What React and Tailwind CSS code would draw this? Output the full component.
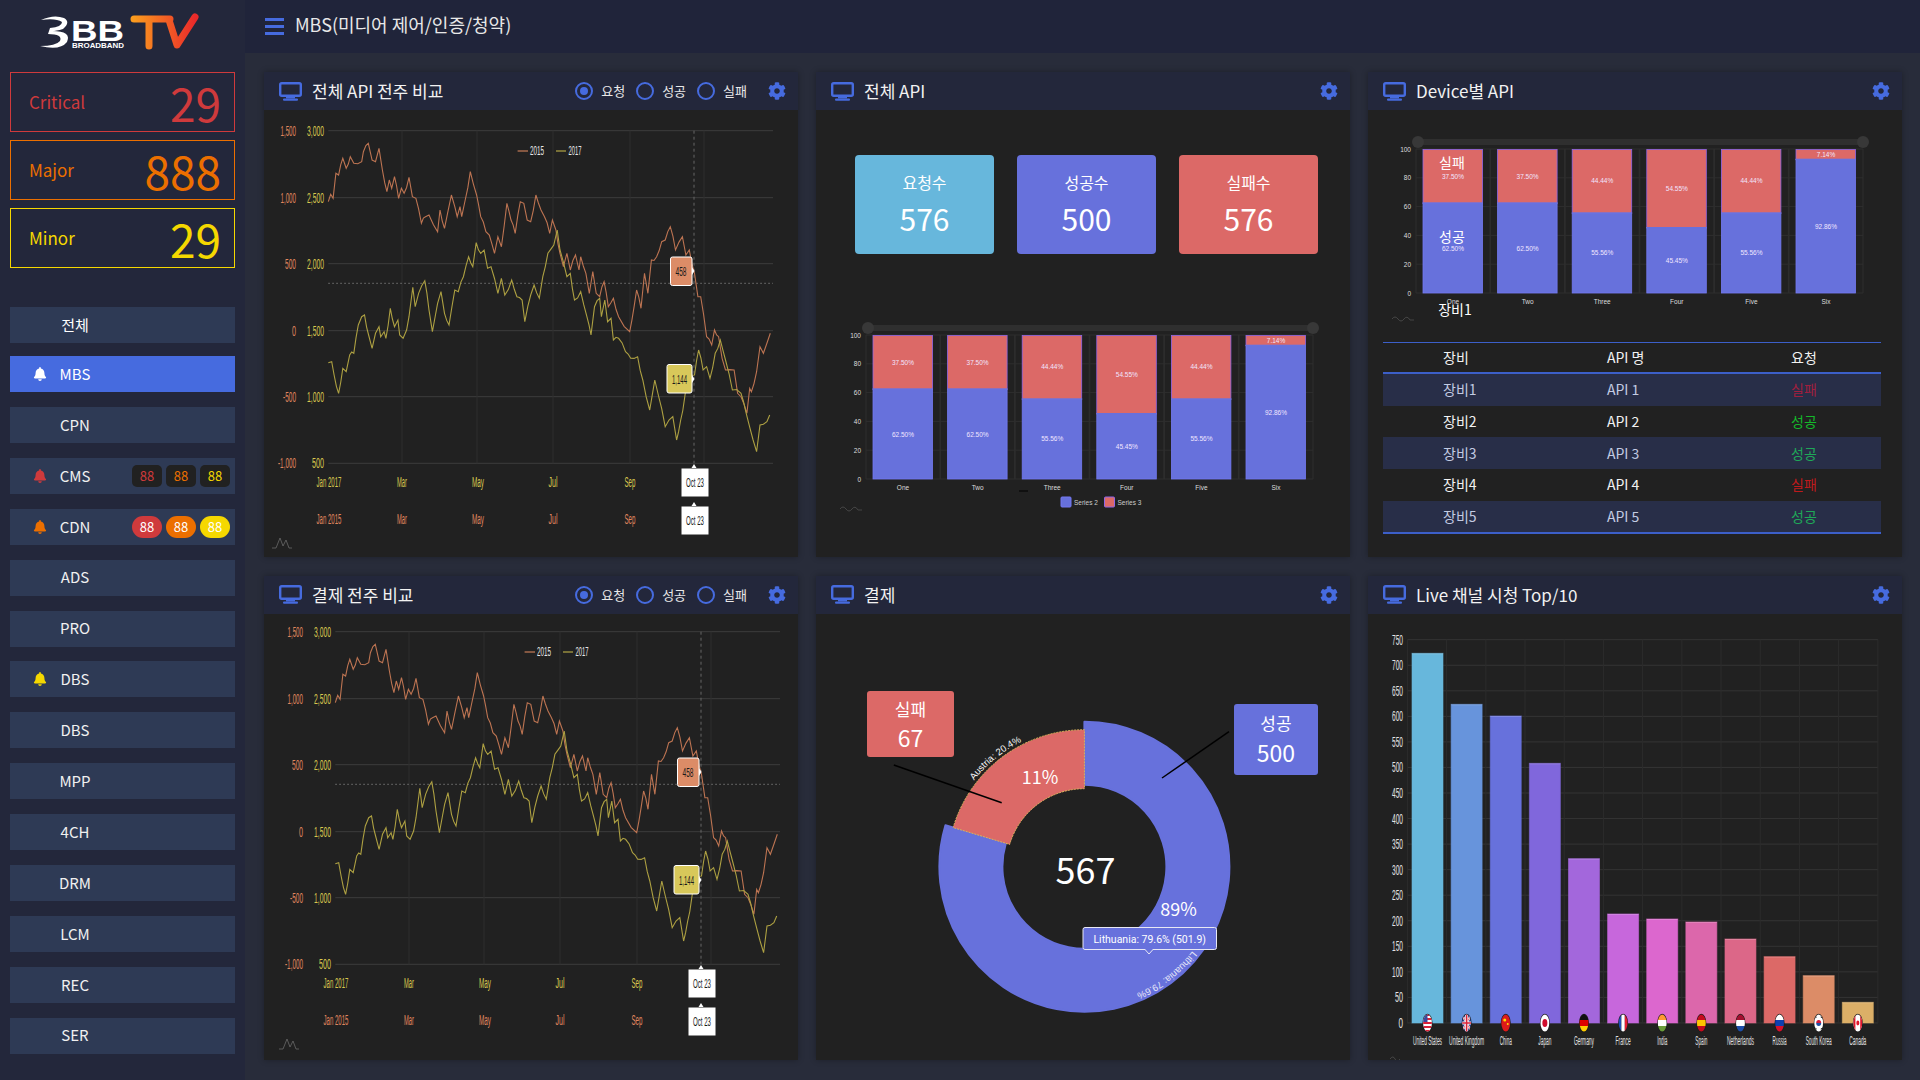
import React from "react";
import { FaBell, FaCog } from "react-icons/fa";

const PALETTE = ["#67b7dc", "#6794dc", "#6771dc", "#8067dc", "#a367dc", "#c767dc", "#dc67ce", "#dc67ab", "#dc6788", "#dc6967", "#dc8c67", "#dcaf67"];
const LABEL_FONT = "'Liberation Sans', sans-serif";

const NAV = [
  { name: "CPN" },
  { name: "CMS", bell: "#cf3a3c", badges: "dark" },
  { name: "CDN", bell: "#ec6f00", badges: "solid" },
  { name: "ADS" },
  { name: "PRO" },
  { name: "DBS", bell: "#f5d800" },
  { name: "DBS" },
  { name: "MPP" },
  { name: "4CH" },
  { name: "DRM" },
  { name: "LCM" },
  { name: "REC" },
  { name: "SER" },
];

// zoomed reference coordinates, converted in linePath()
const SERIES_A = [198,425,205,403,212,415,220,340,228,345,240,295,250,325,262,290,272,310,295,305,300,275,314,250,325,300,335,305,345,265,355,330,368,395,375,360,382,385,390,350,402,415,410,385,418,400,432,352,442,410,452,415,468,490,480,470,490,465,515,515,522,450,535,505,555,405,565,440,572,470,580,440,585,470,595,420,610,335,628,405,640,470,655,515,665,525,680,580,690,530,700,560,716,430,728,480,740,520,755,425,765,430,775,480,785,485,800,405,815,450,825,470,840,520,848,480,858,510,870,580,880,620,890,580,900,630,915,585,925,630,930,590,945,640,955,700,965,635,975,700,985,710,998,665,1010,740,1025,715,1040,770,1072,815,1085,740,1092,690,1105,745,1115,640,1125,700,1135,600,1150,590,1165,545,1175,540,1190,500,1205,570,1225,530,1235,585,1245,570,1260,640,1270,710,1278,710,1295,830,1310,855,1318,810,1330,830,1340,895,1350,930,1375,930,1385,1000,1395,1010,1412,1060,1420,985,1425,995,1440,935,1450,860,1460,880,1470,850,1480,820,1488,790];
const SERIES_B = [198,908,208,905,215,945,228,1000,240,925,250,935,260,885,272,880,285,795,295,770,303,765,315,825,325,865,335,820,345,800,350,830,360,815,365,835,378,745,390,800,400,780,405,825,415,835,425,810,432,770,443,682,450,740,460,700,478,662,490,750,500,815,515,730,525,695,535,760,548,795,565,690,575,695,590,650,605,590,617,620,627,548,640,580,650,570,660,625,670,620,690,700,700,655,710,705,730,660,745,710,760,720,768,785,785,705,795,675,810,715,820,650,835,580,852,555,862,510,870,570,890,650,900,640,912,720,930,695,948,770,960,825,970,740,985,715,990,770,1000,720,1008,785,1018,775,1025,840,1040,835,1060,875,1075,895,1095,890,1110,960,1130,1050,1145,960,1155,1005,1175,1100,1197,1070,1208,1140,1220,1080,1232,1010,1240,950,1260,945,1272,870,1285,930,1295,920,1305,955,1320,880,1335,840,1350,900,1370,990,1395,1000,1410,1060,1430,1140,1440,1175,1450,1095,1470,1085,1478,1065,1488,1165];

function linePath(data, seed) {
  let d = "";
  for (let i = 0; i < data.length - 2; i += 2) {
    const x0 = data[i] / 2.9 - 4;
    const y0 = data[i + 1] / 3 - 50;
    const x1 = data[i + 2] / 2.9 - 4;
    const y1 = data[i + 3] / 3 - 50;
    const n = x1 - x0 > 4 ? 2 : 1;
    for (let k = 0; k < n; k++) {
      const t = k / n;
      const wob = k === 0 ? 0 : Math.sin(i * 12.9898 + seed + k) * 2.2;
      d += `${d ? "L" : "M"}${(x0 + (x1 - x0) * t).toFixed(1)} ${(y0 + (y1 - y0) * t + wob).toFixed(1)}`;
    }
  }
  return d;
}

// squeezed labels: the reference charts are narrow, tall text
function Squeezed({ x, y, w, fill, anchor = "middle", size = 14, children }) {
  return (
    <text x={x} y={y} textLength={w} lengthAdjust="spacingAndGlyphs" textAnchor={anchor} dominantBaseline="central" fill={fill} fontSize={size} fontFamily={LABEL_FONT}>
      {children}
    </text>
  );
}

function ChartMark({ x, y }) {
  return (
    <path d={`M${x} ${y}h4l4 -10l3 8l3 -6l3 8h3`} fill="none" stroke="#6a6a6a" strokeWidth="0.8" />
  );
}

function Sidebar() {
  return (
    <aside className="w-[245px] shrink-0 bg-[#23273b] flex flex-col">
      <div className="h-[72px] pl-[38px] pt-[13px]">
        <svg width="165" height="40" viewBox="0 0 165 40">
          <defs>
            <linearGradient id="tv" x1="0" x2="1" y1="0" y2="0">
              <stop offset="0" stopColor="#fb9b1e" />
              <stop offset="1" stopColor="#ea2a2a" />
            </linearGradient>
          </defs>
          <path d="M3 7Q16 1 26 5Q33 9 25 16Q18 18 14 18Q34 18 29 29Q22 38 2 33Q18 33 22 28Q25 21 10 21L12 15Q24 14 24 9Q18 5 3 7Z" fill="#fff" />
          <text x="33" y="28" fill="#fff" fontSize="29" fontWeight="700" fontFamily={LABEL_FONT} textLength="53" lengthAdjust="spacingAndGlyphs">BB</text>
          <text x="34" y="35" fill="#fff" fontSize="6.5" fontWeight="700" fontFamily={LABEL_FONT} textLength="52" lengthAdjust="spacingAndGlyphs">BROADBAND</text>
          <path d="M96 6H132M111 6V33M131 7L139 32L157 4" fill="none" stroke="url(#tv)" strokeWidth="7" strokeLinecap="round" strokeLinejoin="round" />
        </svg>
      </div>
      <div className="px-[10px] flex flex-col gap-2">
        <AlertBox label="Critical" value="29" text="text-[#cf3a3c]" border="border-[#cf3a3c]" />
        <AlertBox label="Major" value="888" text="text-[#ec6f00]" border="border-[#ec6f00]" />
        <AlertBox label="Minor" value="29" text="text-[#f5d800]" border="border-[#f5d800]" />
      </div>
      <div className="px-[10px] mt-[39px] flex flex-col">
        <div className="h-9 bg-[#2e3a55] flex items-center text-white text-[15px]">
          <span className="w-[130px] text-center">전체</span>
        </div>
        <div className="h-9 mt-[13px] bg-[#466bdf] flex items-center text-white text-[15px] pl-[23px]">
          <FaBell className="w-[14px] h-[14px] text-white" />
          <span className="w-[56px] text-center">MBS</span>
        </div>
        <div className="mt-[15px] flex flex-col gap-[14.9px]">
          {NAV.map((item, i) => (
            <NavRow key={i} {...item} />
          ))}
        </div>
      </div>
    </aside>
  );
}

function AlertBox({ label, value, text, border }) {
  return (
    <div className={`h-[60px] border flex items-center justify-between pl-[18px] pr-[13px] ${border} ${text}`}>
      <span className="text-[17px]">{label}</span>
      <span className="text-[46px] leading-none">{value}</span>
    </div>
  );
}

function NavRow({ name, bell, badges }) {
  return (
    <div className="h-9 bg-[#2e3a55] flex items-center text-[#f0f0f0] text-[15px] pl-[23px] pr-[5px]">
      <span className="w-[14px] flex">{bell && <FaBell className="w-[14px] h-[14px]" style={{ color: bell }} />}</span>
      <span className="w-[56px] text-center">{name}</span>
      {badges === "dark" && (
        <div className="ml-auto flex gap-1 text-[13px]">
          <span className="w-[30px] h-[22px] rounded-[5px] bg-[#212121] text-[#cf3a3c] text-center leading-[22px]">88</span>
          <span className="w-[30px] h-[22px] rounded-[5px] bg-[#212121] text-[#ec6f00] text-center leading-[22px]">88</span>
          <span className="w-[30px] h-[22px] rounded-[5px] bg-[#212121] text-[#f5d800] text-center leading-[22px]">88</span>
        </div>
      )}
      {badges === "solid" && (
        <div className="ml-auto flex gap-1 text-[13px] text-white">
          <span className="w-[30px] h-[22px] rounded-full bg-[#cf3a3c] text-center leading-[22px]">88</span>
          <span className="w-[30px] h-[22px] rounded-full bg-[#ec6f00] text-center leading-[22px]">88</span>
          <span className="w-[30px] h-[22px] rounded-full bg-[#f5d800] text-center leading-[22px]">88</span>
        </div>
      )}
    </div>
  );
}

function MonitorIcon() {
  return (
    <svg width="23" height="19" viewBox="0 0 23 19" className="shrink-0">
      <rect x="1.2" y="1.2" width="20.6" height="12.6" rx="1.5" fill="none" stroke="#466bdf" strokeWidth="2.4" />
      <rect x="7" y="14" width="9" height="2.5" fill="#466bdf" />
      <rect x="4" y="16.5" width="15" height="2.2" rx="1" fill="#466bdf" />
    </svg>
  );
}

function Radio({ label, on, gap }) {
  return (
    <div className={`flex items-center ${gap}`}>
      <span className="w-[18px] h-[18px] rounded-full border-2 border-[#466bdf] flex items-center justify-center">
        {on && <span className="w-2 h-2 rounded-full bg-[#466bdf]" />}
      </span>
      <span className="text-[13px] text-[#e8e8e8] ml-[8px]">{label}</span>
    </div>
  );
}

function Panel({ title, radios, children }) {
  return (
    <section className="bg-[#212121] flex flex-col overflow-hidden shadow-[0_0_6px_rgba(0,0,0,0.3)]">
      <header className="h-[38px] shrink-0 bg-[#23273b] flex items-center pl-[15px] pr-[12px]">
        <MonitorIcon />
        <h2 className="ml-[10px] text-[17px] text-[#f2f2f2] font-normal">{title}</h2>
        <div className="ml-auto flex items-center">
          {radios && (
            <div className="flex items-center gap-[11px] mr-[21px]">
              <Radio label="요청" on />
              <Radio label="성공" />
              <Radio label="실패" />
            </div>
          )}
          <FaCog className="w-[18px] h-[18px] text-[#466bdf]" />
        </div>
      </header>
      <div className="flex-1 relative min-h-0">{children}</div>
    </section>
  );
}

function LineChart({ dx, dy }) {
  const orange = "#e0875f";
  const yellow = "#d9c84f";
  const grid = [20.7, 87.7, 153.7, 220.7, 286.7, 353.3];
  const left = [["1,500", 15.5], ["1,000", 15.5], ["500", 11], ["0", 4], ["-500", 13], ["-1,000", 18]];
  const right = [["3,000", 17], ["2,500", 17], ["2,000", 17], ["1,500", 17], ["1,000", 17], ["500", 12]];
  const xs = [["Mar", 138, 10], ["May", 214, 12], ["Jul", 289, 9], ["Sep", 366, 11]];
  return (
    <svg width="534" height="447" viewBox="0 0 534 447" className="block">
      <g transform={`translate(${dx} ${dy})`}>
        {grid.map((y) => (
          <line key={y} x1="64.3" x2="509" y1={y} y2={y} stroke="#3d3d3d" />
        ))}
        {[138, 213, 289, 366, 440].map((x) => (
          <line key={x} x1={x} x2={x} y1="20.7" y2="353.3" stroke="#2f2f2f" />
        ))}
        <line x1="64.3" x2="509" y1="173.3" y2="173.3" stroke="#777" strokeDasharray="1.5 2.5" />
        <line x1="430" x2="430" y1="20.7" y2="353.3" stroke="#666" strokeDasharray="3 3" />

        <path d={linePath(SERIES_A, 1)} fill="none" stroke="#bd7452" strokeWidth="1.1" />
        <path d={linePath(SERIES_B, 5)} fill="none" stroke="#ada042" strokeWidth="1.1" />

        {grid.map((y, i) => (
          <g key={y}>
            <Squeezed x="32" y={y} w={left[i][1]} fill={orange} anchor="end">{left[i][0]}</Squeezed>
            <Squeezed x="60" y={y} w={right[i][1]} fill={yellow} anchor="end">{right[i][0]}</Squeezed>
          </g>
        ))}

        <line x1="253.6" x2="264" y1="41" y2="41" stroke="#c67c58" strokeWidth="1.2" />
        <Squeezed x="273" y="41" w="14" fill="#e8e8e8" size={12}>2015</Squeezed>
        <line x1="292" x2="302" y1="41" y2="41" stroke="#b3a645" strokeWidth="1.2" />
        <Squeezed x="311" y="41" w="13" fill="#e8e8e8" size={12}>2017</Squeezed>

        <Squeezed x="65" y="372" w="25" fill={yellow}>Jan 2017</Squeezed>
        <Squeezed x="65" y="409" w="25" fill={orange}>Jan 2015</Squeezed>
        {xs.map(([t, x, w]) => (
          <g key={t}>
            <Squeezed x={x} y="372" w={w} fill={yellow}>{t}</Squeezed>
            <Squeezed x={x} y="409" w={w} fill={orange}>{t}</Squeezed>
          </g>
        ))}

        <rect x="406.5" y="147" width="21.5" height="28.5" rx="2" fill="#dc8c67" stroke="#fff" />
        <path d="M428 157l2.5 4l-2.5 4z" fill="#fff" />
        <Squeezed x="417" y="161.5" w="11" fill="#1a1a1a" size={13}>458</Squeezed>
        <rect x="403" y="254.5" width="25" height="28.5" rx="2" fill="#d8c85a" stroke="#fff" />
        <path d="M428 265l2.5 4l-2.5 4z" fill="#fff" />
        <Squeezed x="415.5" y="269" w="15" fill="#1a1a1a" size={13}>1,144</Squeezed>

        {[358, 396].map((y) => (
          <g key={y}>
            <rect x="417" y={y} width="28" height="29" fill="#fff" stroke="#222" />
            <path d={`M427.5 ${y}l2.5 -4l2.5 4z`} fill="#fff" />
            <Squeezed x="431" y={y + 14} w="18" fill="#1a1a1a" size={13}>Oct 23</Squeezed>
          </g>
        ))}
        <ChartMark x={8} y={438} />
      </g>
    </svg>
  );
}

const STACKS = [
  [62.5, "62.50%", "37.50%"],
  [62.5, "62.50%", "37.50%"],
  [55.56, "55.56%", "44.44%"],
  [45.45, "45.45%", "54.55%"],
  [55.56, "55.56%", "44.44%"],
  [92.86, "92.86%", "7.14%"],
];
const STACK_NAMES = ["One", "Two", "Three", "Four", "Five", "Six"];

function StackedChart({ x0, height, legend, children }) {
  const top = 15;
  const h = 144;
  return (
    <svg width="534" height={height} viewBox={`0 0 534 ${height}`} className="block">
      <rect x={x0 + 2} y="5" width="444" height="6" fill="#2f2f2f" />
      <circle cx={x0 + 2} cy="8" r="6" fill="#383838" />
      <circle cx={x0 + 447} cy="8" r="6" fill="#383838" />
      {[0, 20, 40, 60, 80, 100].map((v) => {
        const y = top + h - (v / 100) * h;
        return (
          <g key={v}>
            <line x1={x0} x2={x0 + 447} y1={y} y2={y} stroke="#2e2e2e" />
            <text x={x0 - 5} y={y} textAnchor="end" dominantBaseline="central" fontSize="6.5" fill="#ddd" fontFamily={LABEL_FONT}>{v}</text>
          </g>
        );
      })}
      {STACKS.map(([v, a, b], i) => {
        const x = x0 + 7 + i * 74.6;
        const split = top + h - (v / 100) * h;
        return (
          <g key={i}>
            <line x1={x - 7} x2={x - 7} y1={top} y2={top + h} stroke="#2e2e2e" />
            <line x1={x + 67} x2={x + 67} y1={top} y2={top + h} stroke="#2e2e2e" />
            <rect x={x} y={top + 0.5} width="59.5" height={split - top} fill="#dc6967" stroke="#9166e6" strokeWidth="0.8" />
            <rect x={x} y={split} width="59.5" height={top + h - split} fill="#6771dc" stroke="#7479f2" strokeWidth="0.8" />
            <line x1={x - 0.4} x2={x + 60} y1={split} y2={split} stroke="#6771dc" />
            <text x={x + 30} y={top + (split - top) / 2} textAnchor="middle" dominantBaseline="central" fontSize="6.5" fill="#f1e6ff" fontFamily={LABEL_FONT}>{b}</text>
            <text x={x + 30} y={split + (top + h - split) / 2} textAnchor="middle" dominantBaseline="central" fontSize="6.5" fill="#f1e6ff" fontFamily={LABEL_FONT}>{a}</text>
            <text x={x + 30} y={top + h + 8} textAnchor="middle" dominantBaseline="central" fontSize="6.5" fill="#ddd" fontFamily={LABEL_FONT}>{STACK_NAMES[i]}</text>
          </g>
        );
      })}
      {legend && (
        <g fontSize="6.5" fill="#ccc" fontFamily={LABEL_FONT}>
          <line x1="203" x2="212" y1="171" y2="171" stroke="#000" />
          <rect x="245" y="177" width="10" height="10" rx="1" fill="#6771dc" stroke="#7479f2" />
          <text x="258" y="182" dominantBaseline="central">Series 2</text>
          <rect x="288.5" y="177" width="10" height="10" rx="1" fill="#dc6967" stroke="#9166e6" />
          <text x="301.5" y="182" dominantBaseline="central">Series 3</text>
        </g>
      )}
      <path d={`M24 ${legend ? 189 : 185}q3 -4 6 0t6 0t6 1h4`} fill="none" stroke="#555" strokeWidth="0.7" />
      {children}
    </svg>
  );
}

const ROWS = [
  ["장비1", "API 1", "실패", "text-[#a01f3e]"],
  ["장비2", "API 2", "성공", "text-[#14b82a]"],
  ["장비3", "API 3", "성공", "text-[#1fa858]"],
  ["장비4", "API 4", "실패", "text-[#bf1a1c]"],
  ["장비5", "API 5", "성공", "text-[#1fa858]"],
];

function DeviceTable() {
  return (
    <div className="ml-[15px] w-[498px] text-[14px] text-[#f2f2f2] border-t border-b-2 border-[#3c5fc9]">
      <div className="grid grid-cols-[224px_184px_90px] h-[31px] items-center border-b-2 border-[#3c5fc9]">
        <span className="pl-[60px]">장비</span>
        <span>API 명</span>
        <span>요청</span>
      </div>
      {ROWS.map(([a, b, c, color], i) => (
        <div key={a} className={`grid grid-cols-[224px_184px_90px] h-[31.7px] items-center ${i % 2 === 0 ? "bg-[#282e48] text-[#c3cbe2]" : ""}`}>
          <span className="pl-[60px]">{a}</span>
          <span>{b}</span>
          <span className={color}>{c}</span>
        </div>
      ))}
    </div>
  );
}

function arcPath(cx, cy, r0, r1, a0, a1) {
  const pt = (r, a) => {
    const t = (a * Math.PI) / 180;
    return `${(cx + r * Math.sin(t)).toFixed(2)} ${(cy - r * Math.cos(t)).toFixed(2)}`;
  };
  const large = Math.abs(a1 - a0) > 180 ? 1 : 0;
  return `M${pt(r1, a0)}A${r1} ${r1} 0 ${large} 1 ${pt(r1, a1)}L${pt(r0, a1)}A${r0} ${r0} 0 ${large} 0 ${pt(r0, a0)}Z`;
}

function circlePath(cx, cy, r, a0, a1) {
  const pt = (a) => {
    const t = (a * Math.PI) / 180;
    return `${(cx + r * Math.sin(t)).toFixed(2)} ${(cy - r * Math.cos(t)).toFixed(2)}`;
  };
  return `M${pt(a0)}A${r} ${r} 0 0 1 ${pt(a1)}`;
}

function DonutChart() {
  const cx = 268.4;
  const cy = 252.7;
  return (
    <>
      <svg width="534" height="447" viewBox="0 0 534 447" className="block">
        <defs>
          <path id="arc-austria" d={circlePath(cx, cy, 140, -52, -15)} />
          <path id="arc-lithuania" d={circlePath(cx, cy, 137, 128, 175)} />
        </defs>
        <path d={arcPath(cx, cy, 82, 145, 0, 286.6)} fill="#6771dc" stroke="#6771dc" strokeLinejoin="round" strokeWidth="2" />
        <path d={arcPath(cx, cy, 78, 137, -73.4, 0)} fill="#dc6967" stroke="#d9b45c" strokeDasharray="2 1" strokeLinejoin="round" />
        <text fontSize="9.5" fill="#f5f5f5" fontFamily={LABEL_FONT}>
          <textPath href="#arc-austria">Austria: 20.4%</textPath>
        </text>
        <text fontSize="9.5" fill="#e8e8f8" fontFamily={LABEL_FONT}>
          <textPath href="#arc-lithuania">Lithuania: 79.6%</textPath>
        </text>
        <text x={cx + 1} y={cy + 1} textAnchor="middle" dominantBaseline="central" fontSize="36" fill="#fff">567</text>
        <text x="224" y="162" textAnchor="middle" dominantBaseline="central" fontSize="18" fill="#fff">11%</text>
        <text x="362.5" y="294" textAnchor="middle" dominantBaseline="central" fontSize="18" fill="#fff">89%</text>
        <line x1="77.8" y1="151" x2="185.7" y2="188.7" stroke="#000" strokeWidth="1.5" />
        <line x1="413" y1="117.7" x2="346" y2="164" stroke="#000" strokeWidth="1.5" />
        <rect x="267" y="313.5" width="133.5" height="22" rx="2" fill="#6771dc" stroke="#e8e8f4" />
        <path d="M329 335.5l4 4.5l4 -4.5z" fill="#6771dc" stroke="#e8e8f4" />
        <line x1="329.5" x2="336.5" y1="335.5" y2="335.5" stroke="#6771dc" />
        <text x="333.7" y="325" textAnchor="middle" dominantBaseline="central" fontSize="10.5" fill="#fff" fontFamily="Roboto, sans-serif">Lithuania: 79.6% (501.9)</text>
      </svg>
      <div className="absolute left-[51px] top-[77px] w-[87px] h-[66px] rounded-[3px] bg-[#dc6967] text-white text-center flex flex-col justify-center">
        <div className="text-[17px] leading-[26px]">실패</div>
        <div className="text-[23px] leading-[30px]">67</div>
      </div>
      <div className="absolute left-[418px] top-[90px] w-[84px] h-[71px] rounded-[3px] bg-[#6771dc] text-white text-center flex flex-col justify-center">
        <div className="text-[17px] leading-[26px]">성공</div>
        <div className="text-[23px] leading-[32px]">500</div>
      </div>
    </>
  );
}

const TOPS = [250, 403, 438, 580, 866, 1032, 1047, 1056, 1107, 1160, 1217, 1297];
const COUNTRIES = [
  ["United States", 29], ["United Kingdom", 35], ["China", 12], ["Japan", 13], ["Germany", 20], ["France", 15],
  ["India", 10], ["Spain", 12], ["Netherlands", 27], ["Russia", 14], ["South Korea", 26], ["Canada", 17],
];

function Flag({ i, x, y }) {
  const bands = {
    4: ["#111", "#d00", "#fc0"],
    7: ["#c60b1e", "#ffc400", "#c60b1e"],
    8: ["#a3102f", "#fff", "#1c4ea8"],
    9: ["#fff", "#0f3fb0", "#d5102b"],
    6: ["#f93", "#fff", "#6a9c3a"],
  }[i];
  let body = null;
  if (bands) {
    body = bands.map((c, k) => <rect key={k} x="-5" y={-9 + k * 6} width="10" height="6" fill={c} />);
  } else if (i === 0) {
    body = (
      <>
        <rect x="-5" y="-9" width="10" height="18" fill="#fff" />
        {[-9, -5, -1, 3, 7].map((s) => <rect key={s} x="-5" y={s} width="10" height="2" fill="#d8233a" />)}
        <rect x="-5" y="-9" width="5" height="8" fill="#3c4a9e" />
      </>
    );
  } else if (i === 1) {
    body = (
      <>
        <rect x="-5" y="-9" width="10" height="18" fill="#29408c" />
        <path d="M-5 -9L5 9M5 -9L-5 9" stroke="#fff" strokeWidth="2" />
        <path d="M-5 -9L5 9M5 -9L-5 9" stroke="#d8233a" strokeWidth="0.7" />
        <path d="M0 -9V9M-5 0H5" stroke="#fff" strokeWidth="3" />
        <path d="M0 -9V9M-5 0H5" stroke="#d8233a" strokeWidth="1.6" />
      </>
    );
  } else if (i === 2) {
    body = (
      <>
        <rect x="-5" y="-9" width="10" height="18" fill="#de1a1a" />
        <circle cx="-1" cy="-3" r="1.5" fill="#fd0" />
        <circle cx="2" cy="1" r="1" fill="#fd0" />
      </>
    );
  } else if (i === 3) {
    body = (
      <>
        <rect x="-5" y="-9" width="10" height="18" fill="#fff" />
        <ellipse rx="2.5" ry="4" fill="#d00c2c" />
      </>
    );
  } else if (i === 5) {
    body = (
      <>
        <rect x="-5" y="-9" width="3.3" height="18" fill="#1d4eb8" />
        <rect x="-1.7" y="-9" width="3.4" height="18" fill="#fff" />
        <rect x="1.7" y="-9" width="3.3" height="18" fill="#e31b34" />
      </>
    );
  } else if (i === 10) {
    body = (
      <>
        <rect x="-5" y="-9" width="10" height="18" fill="#fff" />
        <path d="M-2.5 0a2.5 3 0 0 1 5 0z" fill="#d3173a" />
        <path d="M-2.5 0a2.5 3 0 0 0 5 0z" fill="#1f4fa3" />
        <path d="M-4 -5L-2 -6M4 -5L2 -6M-4 5L-2 6M4 5L2 6" stroke="#222" strokeWidth="1" />
      </>
    );
  } else {
    body = (
      <>
        <rect x="-5" y="-9" width="10" height="18" fill="#fff" />
        <rect x="-5" y="-9" width="2.6" height="18" fill="#e0162b" />
        <rect x="2.4" y="-9" width="2.6" height="18" fill="#e0162b" />
        <ellipse rx="1.5" ry="2.4" fill="#e0162b" />
      </>
    );
  }
  return (
    <g transform={`translate(${x} ${y})`}>
      <clipPath id={`flag-${i}`}>
        <ellipse rx="4.4" ry="8.6" />
      </clipPath>
      <ellipse rx="5" ry="9.2" fill="#1c1c1c" />
      <g clipPath={`url(#flag-${i})`}>{body}</g>
    </g>
  );
}

function TopChart() {
  return (
    <svg width="534" height="447" viewBox="0 0 534 447" className="block">
      {Array.from({ length: 16 }).map((_, i) => {
        const y = 25.7 + i * 25.55;
        const v = 750 - i * 50;
        return (
          <g key={v}>
            <line x1="39.4" x2="510" y1={y} y2={y} stroke="#343434" />
            <Squeezed x="35" y={y} w={v >= 100 ? 11 : v === 50 ? 8 : 4.5} fill="#e4e4e4" anchor="end">{v}</Squeezed>
          </g>
        );
      })}
      {Array.from({ length: 13 }).map((_, i) => (
        <line key={i} x1={39.4 + i * 39.2} x2={39.4 + i * 39.2} y1="25.7" y2="409" stroke="#2c2c2c" />
      ))}
      {TOPS.map((t, i) => {
        const x = 44 + i * 39.12;
        const y = t / 3 - 44;
        const color = PALETTE[i];
        return (
          <g key={i}>
            <rect x={x} y={y} width="31" height={409 - y} fill={color} />
            <rect x={x} y={y} width="31" height={409 - y} fill="#fff" fillOpacity="0" stroke={color} strokeOpacity="0.6" />
            <rect x={x} y={y} width="31" height="1" fill="#fff" fillOpacity="0.18" />
            <Flag i={i} x={x + 15.5} y={409} />
            <Squeezed x={x + 15.5} y="427" w={COUNTRIES[i][1]} fill="#e4e4e4" size={12}>{COUNTRIES[i][0]}</Squeezed>
          </g>
        );
      })}
      <path d="M22 445q3 -4 5 0t5 0" fill="none" stroke="#555" strokeWidth="0.7" />
    </svg>
  );
}

function StatCard({ label, value, color }) {
  return (
    <div className={`w-[139px] h-[99px] rounded-[4px] text-white text-center flex flex-col justify-center ${color}`}>
      <div className="text-[16px] leading-[24px]">{label}</div>
      <div className="text-[30px] leading-[42px] mt-[3px]">{value}</div>
    </div>
  );
}

export default function App() {
  return (
    <div className="w-full h-screen overflow-hidden flex bg-[#282c3a] font-['Noto_Sans_CJK_KR','Noto_Sans',sans-serif]">
      <Sidebar />
      <div className="flex-1 min-w-0 flex flex-col">
        <div className="h-[53px] shrink-0 bg-[#20243a] flex items-center pl-[20px]">
          <div className="w-[19px] flex flex-col gap-[4px]">
            <span className="h-[3px] bg-[#466bdf]" />
            <span className="h-[3px] bg-[#466bdf]" />
            <span className="h-[3px] bg-[#466bdf]" />
          </div>
          <span className="ml-[11px] text-[18px] text-[#e8e8e8] -mt-[5px]">MBS(미디어 제어/인증/청약)</span>
        </div>
        <main className="flex-1 min-h-0 grid grid-cols-3 grid-rows-2 gap-x-[18px] gap-y-[19px] pt-[19px] pl-[19px] pr-[18px] pb-[20px]">
          <Panel title="전체 API 전주 비교" radios>
            <LineChart dx={0} dy={0} />
          </Panel>
          <Panel title="전체 API">
            <div className="flex justify-between pl-[39px] pr-[32px] pt-[45px]">
              <StatCard label="요청수" value="576" color="bg-[#67b7dc]" />
              <StatCard label="성공수" value="500" color="bg-[#6771dc]" />
              <StatCard label="실패수" value="576" color="bg-[#dc6967]" />
            </div>
            <div className="mt-[66px]">
              <StackedChart x0={50} height={200} legend />
            </div>
          </Panel>
          <Panel title="Device별 API">
            <div className="pt-[24px]">
              <StackedChart x0={48} height={208}>
                <text x="84" y="28" textAnchor="middle" dominantBaseline="central" fontSize="14" fill="#fff">실패</text>
                <text x="84" y="102" textAnchor="middle" dominantBaseline="central" fontSize="14" fill="#fff">성공</text>
                <text x="87" y="175" textAnchor="middle" dominantBaseline="central" fontSize="14" fill="#fff">장비1</text>
              </StackedChart>
            </div>
            <DeviceTable />
          </Panel>
          <Panel title="결제 전주 비교" radios>
            <LineChart dx={7} dy={-3} />
          </Panel>
          <Panel title="결제">
            <DonutChart />
          </Panel>
          <Panel title="Live 채널 시청 Top/10">
            <TopChart />
          </Panel>
        </main>
      </div>
    </div>
  );
}
